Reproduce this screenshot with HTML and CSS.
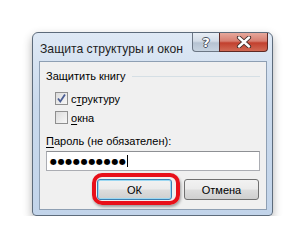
FILE: index.html
```html
<!DOCTYPE html>
<html lang="ru">
<head>
    <meta charset="UTF-8">
    <title>Защита структуры и окон</title>
    <link rel="stylesheet" href="styles.css">
</head>
<body>
    <div class="window">
        <div class="titlebar">
            <span class="title">Защита структуры и окон</span>
            <div class="caption-buttons">
                <span class="cap-btn help">?</span>
                <span class="cap-btn close">
                    <svg width="16" height="12" viewBox="0 0 16 12">
                        <path d="M3 1.5 L13 10.5 M13 1.5 L3 10.5" stroke="#3d2a28" stroke-width="4.2" stroke-linecap="round"/>
                        <path d="M3 1.5 L13 10.5 M13 1.5 L3 10.5" stroke="#ffffff" stroke-width="2.4" stroke-linecap="round"/>
                    </svg>
                </span>
            </div>
        </div>
        <div class="client">
            <div class="group-head">
                <span>Защитить книгу</span>
                <span class="group-line"></span>
            </div>
            <label class="check-row">
                <span class="checkbox">
                    <svg width="11" height="11" viewBox="0 0 11 11">
                        <path d="M2 5.5 L4.3 8.5 L9 1.5" fill="none" stroke="#4b5e94" stroke-width="1.8"/>
                    </svg>
                </span>
                <span>с<u>т</u>руктуру</span>
            </label>
            <label class="check-row">
                <span class="checkbox"></span>
                <span><u>о</u>кна</span>
            </label>
            <div class="field-label"><u>П</u>ароль (не обязателен):</div>
            <div class="password">
                <span class="dots">●●●●●●●●●●</span><span class="caret"></span>
            </div>
            <div class="actions">
                <span class="highlight">
                    <button class="btn btn-default">ОК</button>
                </span>
                <button class="btn">Отмена</button>
            </div>
        </div>
    </div>
</body>
</html>
```

FILE: styles.css
```css
body {
    margin: 0;
    background: #ffffff;
    font-family: "Liberation Sans", Arial, sans-serif;
    font-size: 11px;
    color: #000;
}

.window {
    margin: 32px 0 0 32px;
    width: 241px;
    height: 184px;
    box-sizing: border-box;
    border: 1px solid #5d6b7b;
    border-radius: 6px 6px 4px 4px;
    background: linear-gradient(to bottom, #dfe9f5 0%, #c9d9ec 40%, #c2d4ea 100%);
    box-shadow: 0 4px 10px rgba(0, 0, 0, 0.3);
    padding: 0 5px 5px 6px;
    display: flex;
    flex-direction: column;
}

.titlebar {
    height: 28px;
    display: flex;
    align-items: flex-start;
}

.title {
    margin-top: 9px;
    margin-left: 1px;
    font-size: 12.2px;
    color: #1e1e1e;
    white-space: nowrap;
}

.caption-buttons {
    margin-left: auto;
    margin-right: -1px;
    display: flex;
    flex-shrink: 0;
}

.cap-btn {
    height: 19px;
    display: flex;
    align-items: center;
    justify-content: center;
    box-sizing: border-box;
    border: 1px solid #6b7684;
    border-top: none;
}

.help {
    width: 27px;
    border-right: none;
    border-radius: 0 0 0 4px;
    background: linear-gradient(to bottom, #e8eef5 0%, #d3dce7 45%, #b6c3d2 55%, #c7d3e0 100%);
    color: #fff;
    font-family: "DejaVu Sans", sans-serif;
    font-weight: bold;
    font-size: 13px;
    line-height: 1;
    text-shadow: 1px 0 0 #4a5360, -1px 0 0 #4a5360, 0 1px 0 #4a5360, 0 -1px 0 #4a5360;
}

.close {
    width: 49px;
    border-color: #5e2a25;
    border-radius: 0 0 4px 0;
    background: linear-gradient(to bottom, #e6a89c 0%, #d77e70 45%, #c2402e 55%, #d16a55 100%);
}

.client {
    flex: 1;
    background: #f0f0f0;
    border: 1px solid #8e9fb3;
    padding: 0 6px;
    display: flex;
    flex-direction: column;
}

.group-head {
    display: flex;
    align-items: center;
    margin-top: 6px;
    height: 16px;
}

.group-line {
    flex: 1;
    height: 1px;
    background: #d5dfe5;
    margin-left: 6px;
}

.check-row {
    display: flex;
    align-items: center;
    gap: 3px;
    margin-left: 9px;
    height: 19px;
}

.check-row:first-of-type {
    margin-top: 5px;
}

.checkbox {
    width: 13px;
    height: 13px;
    box-sizing: border-box;
    border: 1px solid #8f8f8f;
    background: linear-gradient(135deg, #dcdcdc 0%, #f7f7f7 100%);
    display: flex;
    align-items: center;
    justify-content: center;
}

u {
    text-decoration-thickness: 1px;
    text-underline-offset: 2px;
}

.field-label {
    margin-top: 8px;
    height: 16px;
}

.password {
    margin-top: 0;
    height: 20px;
    box-sizing: border-box;
    border: 1px solid #abadb3;
    border-top-color: #8e9094;
    background: #fff;
    display: flex;
    align-items: center;
    padding-left: 3px;
}

.dots {
    font-family: "DejaVu Sans", sans-serif;
    font-size: 8px;
    letter-spacing: 0.7px;
}

.caret {
    width: 1px;
    height: 12px;
    background: #000;
}

.actions {
    display: flex;
    justify-content: flex-end;
    gap: 11px;
    margin-top: 8px;
}

.highlight {
    position: relative;
    display: flex;
}

.highlight::after {
    content: "";
    position: absolute;
    top: -6px;
    left: -5px;
    right: -7px;
    bottom: -5px;
    border: 4px solid #e8101a;
    border-radius: 10px;
    box-shadow: 1px 2px 3px rgba(0, 0, 0, 0.35);
}

.btn {
    width: 73px;
    height: 21px;
    padding: 0;
    font-family: inherit;
    font-size: 11px;
    color: #000;
    border: 1px solid #707070;
    border-radius: 3px;
    background: linear-gradient(to bottom, #f2f2f2 0%, #ebebeb 48%, #dddddd 52%, #cfcfcf 100%);
}

.btn-default {
    width: 72px;
    border-color: #3c7fb1;
    box-shadow: inset 0 0 0 1px #9cd8f2;
}

.actions .btn:last-child {
    width: 75px;
    margin-right: 1px;
}
```
